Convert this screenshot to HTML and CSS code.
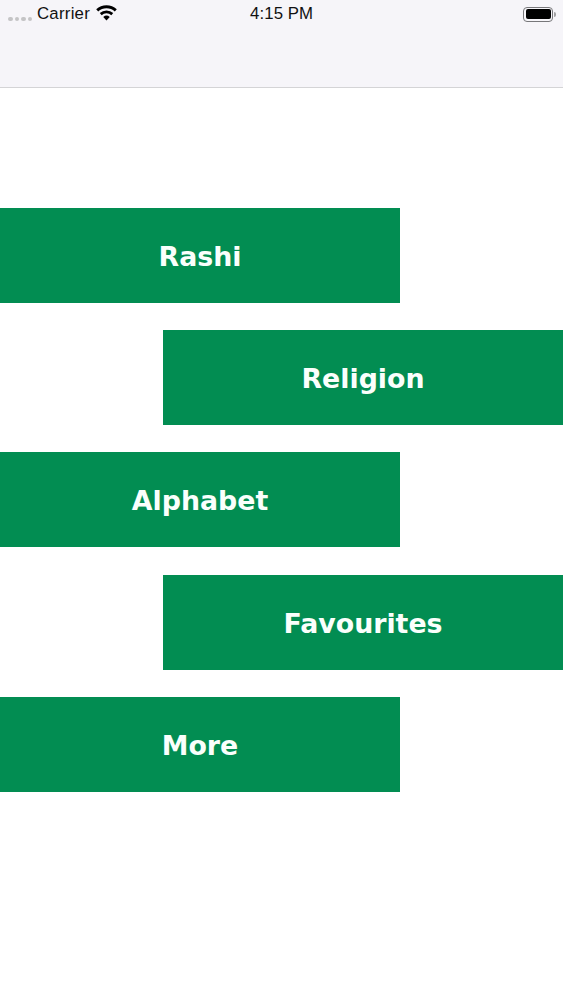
FILE: index.html
```html
<!DOCTYPE html>
<html lang="en">
<head>
<meta charset="utf-8">
<title>Menu</title>
<link rel="stylesheet" href="styles.css">
</head>
<body>
<header class="bar">
  <div class="status">
    <div class="status-left">
      <span class="dots"><i></i><i></i><i></i><i></i></span>
      <span class="carrier">Carrier</span>
      <svg class="wifi" viewBox="0 0 20 15" width="21" height="16" aria-hidden="true">
        <path d="M10 14.6 6.9 11.2a4.6 4.6 0 0 1 6.2 0z" fill="#000"/>
        <path d="M5.4 9.6 3.6 7.6a9.4 9.4 0 0 1 12.8 0l-1.8 2a6.8 6.8 0 0 0-9.2 0z" fill="#000"/>
        <path d="M2.1 6 .2 4a14.4 14.4 0 0 1 19.6 0l-1.9 2a11.6 11.6 0 0 0-15.8 0z" fill="#000"/>
      </svg>
    </div>
    <span class="time">4:15 PM</span>
    <div class="battery"><span class="battery-body"><span class="battery-fill"></span></span><span class="battery-cap"></span></div>
  </div>
</header>
<main class="menu">
  <a class="item">Rashi</a>
  <a class="item right">Religion</a>
  <a class="item">Alphabet</a>
  <a class="item right">Favourites</a>
  <a class="item">More</a>
</main>
</body>
</html>
```
FILE: styles.css
```css
* { box-sizing: border-box; }
html, body { margin: 0; padding: 0; background: #fff; }
body { width: 563px; height: 1000px; overflow: hidden; font-family: "Liberation Sans", Arial, sans-serif; }
.bar { height: 88px; background: #f6f5f9; border-bottom: 1px solid #d4d4d6; }
.status { position: relative; height: 28px; display: flex; align-items: center; justify-content: space-between; padding: 0 8px; }
.status-left { display: flex; align-items: center; }
.dots { display: flex; gap: 2px; margin-top: 10px; margin-right: 5px; }
.dots i { width: 4.5px; height: 4.5px; border-radius: 50%; background: #c4c4c6; display: block; }
.carrier { font-size: 16.8px; line-height: 20px; color: #111; letter-spacing: 0.25px; }
.wifi { margin-left: 6px; margin-top: -2px; }
.time { position: absolute; left: 250px; top: 4px; font-size: 16.8px; line-height: 20px; color: #111; letter-spacing: 0.1px; }
.battery { display: flex; align-items: center; margin-right: -1px; }
.battery-body { width: 30px; height: 15px; border: 1px solid #77777a; border-radius: 4px; padding: 1.5px; display: block; }
.battery-fill { display: block; width: 100%; height: 100%; background: #000; border-radius: 2px; }
.battery-cap { width: 2px; height: 5px; background: #a0a0a2; border-radius: 0 2px 2px 0; margin-left: 1px; }
.menu { display: flex; flex-direction: column; gap: 27.2px; padding-top: 120px; }
.item { width: 400px; height: 95px; background: #028d52; color: #fafffc; font-family: "DejaVu Sans", Verdana, sans-serif; font-weight: 700; font-size: 26.8px; display: flex; align-items: center; justify-content: center; padding-top: 2px; }
.item.right { margin-left: 163px; }
```
